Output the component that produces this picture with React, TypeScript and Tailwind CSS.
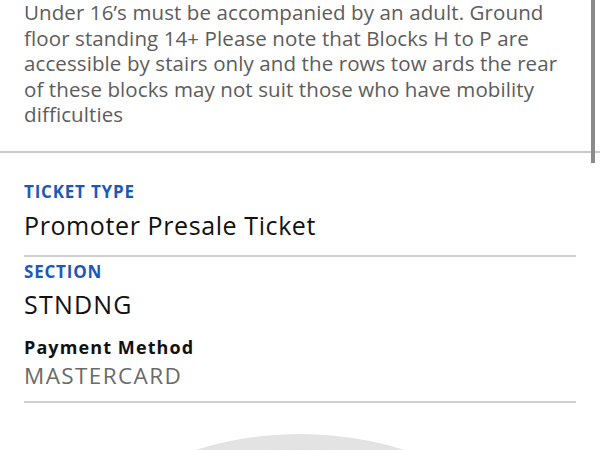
import React from "react";

export default function App() {
  const font = { fontFamily: "'Open Sans', Lato, sans-serif" };
  return (
    <div className="relative w-[600px] h-[450px] overflow-hidden bg-white" style={font}>
      <div className="border-b-2 border-[#cbcbcb] h-[153px] pl-[24px] pr-[10px]">
        <p className="text-[20.5px] leading-[25.5px] text-[#5c5c5c] whitespace-nowrap tracking-[0.1px]">
          Under 16’s must be accompanied by an adult. Ground<br />
          floor standing 14+ Please note that Blocks H to P are<br />
          accessible by stairs only and the rows tow ards the rear<br />
          of these blocks may not suit those who have mobility<br />
          difficulties
        </p>
      </div>
      <div className="absolute right-[5px] top-0 w-[4px] h-[163px] bg-[#8a8a8a]" />

      <div className="px-[24px] pt-[29px]">
        <div className="text-[17px] leading-[20px] font-bold text-[#1c58bb] tracking-[0.8px]">TICKET TYPE</div>
        <div className="mt-[7px] text-[25px] leading-[32px] text-[#111] tracking-[0.6px]">Promoter Presale Ticket</div>
        <div className="mt-[14px] border-t-2 border-[#cfcfcf]" />
        <div className="mt-[5px] text-[17px] leading-[20px] font-bold text-[#1c58bb] tracking-[0.8px]">SECTION</div>
        <div className="mt-[6px] text-[25px] leading-[32px] text-[#111] tracking-[1.2px]">STNDNG</div>
        <div className="mt-[15px] text-[18px] leading-[24px] font-bold text-[#111] tracking-[1.1px]">Payment Method</div>
        <div className="mt-[3px] text-[22.5px] leading-[28px] text-[#6a6a6a] tracking-[1.4px]">MASTERCARD</div>
        <div className="mt-[11px] border-t-2 border-[#cfcfcf]" />
      </div>

      <svg className="absolute left-0 top-[420px]" width="600" height="30" viewBox="0 0 600 30">
        <circle cx="300" cy="366" r="352" fill="#e3e3e3" />
        <circle cx="300" cy="378" r="350" fill="#f2f2f2" />
        <circle cx="300" cy="380" r="352" fill="#d6d6d6" opacity="0.6" />
      </svg>
    </div>
  );
}
